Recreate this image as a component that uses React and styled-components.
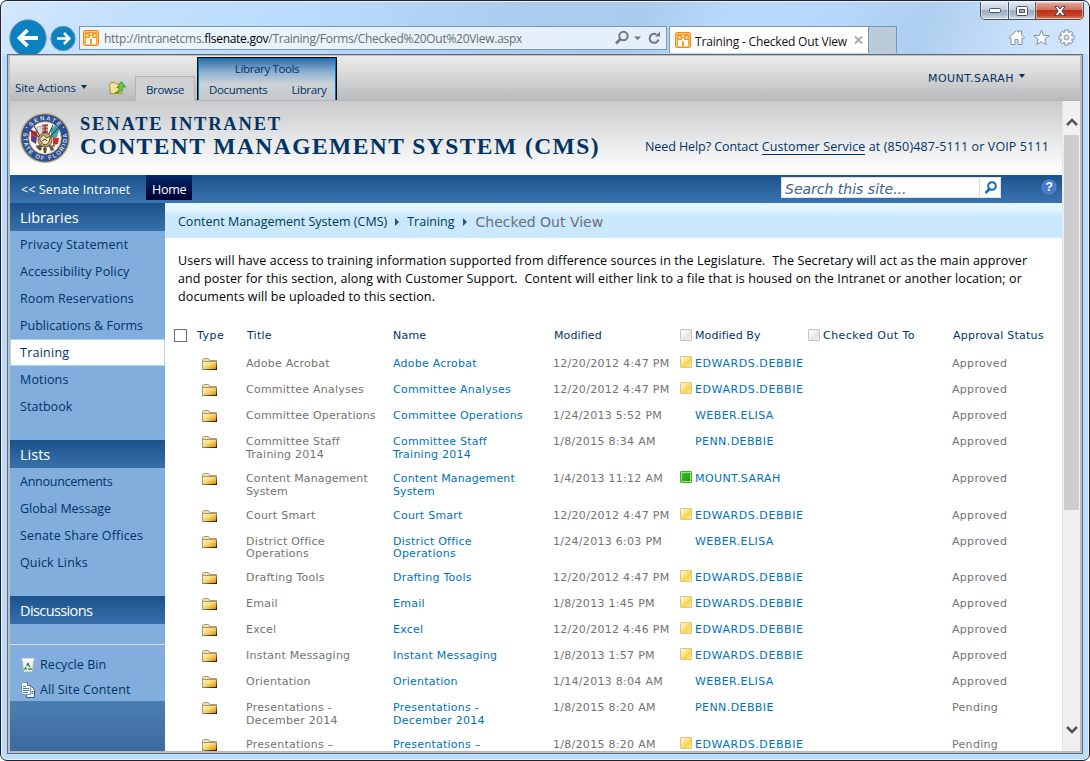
import React from "react";
import styled, { createGlobalStyle, css } from "styled-components";

const ui = `"Open Sans", "Noto Sans", sans-serif`;
const verdana = `"DejaVu Sans", sans-serif`;
const navy = "#003366";
const link = "#0072bc";

const Global = createGlobalStyle`
  * { box-sizing: border-box; }
  html, body { margin: 0; padding: 0; background: #fff; overflow: hidden; }
  a { color: inherit; text-decoration: none; }
`;

const Window = styled.div`
  width: 1090px;
  height: 761px;
  display: flex;
  flex-direction: column;
  overflow: hidden;
  border: 1px solid #20232b;
  border-radius: 7px;
  background: #bcdcfb;
  box-shadow: inset 0 0 0 1px #e6f3ff;
  font-family: ${ui};
  color: ${navy};
`;

const Chrome = styled.div`
  height: 52px;
  flex: none;
  background: linear-gradient(115deg, #d3e8ff 0, #c2dffc 12%, #badcfd 27%, #abcdee 46%, #a9cbec 58%, #b7dafb 66%, #b5d7f9 76%, #aecfef 84%, #cbe2fc 94%, #d4e8fd 100%);
  margin: 1px 1px 0;
  border-radius: 6px 6px 0 0;
  overflow: hidden;
`;

const Caption = styled.div`
  height: 24px;
  display: flex;
  justify-content: flex-end;
  padding-right: 4px;
`;

const CaptionGroup = styled.div`
  display: flex;
  height: 18px;
  border: 1px solid #4c5360;
  border-top: 0;
  border-radius: 0 0 5px 5px;
  overflow: hidden;
`;

const CaptionButton = styled.div`
  width: ${(p) => p.$w}px;
  display: flex;
  align-items: center;
  justify-content: center;
  border-right: ${(p) => (p.$close ? 0 : "1px solid #4c5360")};
  box-shadow: inset 0 0 0 1px rgba(255, 255, 255, 0.45);
  background: ${(p) =>
    p.$close
      ? "linear-gradient(#e3a99c 0, #d2705c 45%, #b8301a 50%, #c5452a 80%, #e08c62 100%)"
      : "linear-gradient(#dfe6ee 0, #c3cfdd 45%, #9babc0 50%, #a9bccf 75%, #cfe0f0 100%)"};
`;

const Toolbar = styled.div`
  height: 28px;
  display: flex;
  align-items: flex-start;
  padding-left: 6px;
`;

const BackSvg = styled.svg`
  display: block;
  flex: none;
  width: 72px;
  height: 36px;
  margin-top: -8px;
`;

const Address = styled.div`
  width: 588px;
  height: 24px;
  margin-left: -1px;
  display: flex;
  align-items: center;
  border: 1px solid #7d96b2;
  background: linear-gradient(90deg, #ecf5fe, #e3effb);
  padding: 0 5px 0 3px;
  color: #6d6d6d;
  font-size: 12px;
  b { font-weight: 400; color: #000; }
`;

const Url = styled.span`
  flex: 1;
  padding-left: 5px;
  white-space: pre;
  letter-spacing: -0.28px;
`;

const Tab = styled.div`
  width: 200px;
  height: 27px;
  margin-left: 2px;
  flex: none;
  display: flex;
  align-items: center;
  padding-left: 5px;
  background: #fff;
  border: 1px solid #7d96b2;
  border-bottom: 0;
  color: #111;
  font-size: 12px;
`;

const TabTitle = styled.span`
  padding: 2px 0 0 4px;
  width: 163px;
  white-space: nowrap;
  letter-spacing: -0.18px;
`;

const NewTab = styled.div`
  width: 28px;
  height: 27px;
  flex: none;
  background: #bccbd9;
  border: 1px solid #7d96b2;
  border-width: 1px 1px 0 0;
`;

const Tools = styled.div`
  display: flex;
  gap: 8px;
  margin: 3px 0 0 111px;
`;

const Frame = styled.div`
  margin: 0 6px 6px;
  flex: 1;
  min-height: 0;
  display: flex;
  flex-direction: column;
  border: 1px solid #5b6b80;
  background: #bfbfbf;
  padding: 1px 1px 1px 2px;
`;

const Client = styled.div`
  flex: 1;
  min-height: 0;
  display: flex;
  flex-direction: column;
  border: 1px solid #b9b9b9;
  border-width: 0 1px 1px 0;
  overflow: hidden;
  background: #fff;
`;

const Ribbon = styled.div`
  height: 45px;
  flex: none;
  display: flex;
  align-items: flex-end;
  border-bottom: 1px solid #b4b5b7;
  background: linear-gradient(#ebebeb, #dcdcdd 35%, #b8babc);
  font-size: 11.5px;
  letter-spacing: -0.28px;
`;

const SiteActions = styled.div`
  width: 125px;
  height: 26px;
  display: flex;
  align-items: center;
  padding: 0 8px 0 5px;
  letter-spacing: -0.1px;
  white-space: nowrap;
  svg { margin-left: auto; }
`;

const Caret = styled.i`
  width: 0;
  height: 0;
  border: 3.5px solid transparent;
  border-top: 4px solid ${navy};
  border-bottom: 0;
  margin-left: 5px;
`;

const BrowseTab = styled.div`
  width: 60px;
  height: 25px;
  margin-bottom: -1px;
  display: flex;
  align-items: center;
  justify-content: center;
  border: 1px solid #b2b4b6;
  border-bottom: 0;
  background: #cfd0d2;
`;

const ToolTabs = styled.div`
  width: 140px;
  height: 43px;
  margin-left: 2px;
  border: 1px solid #0a0a0a;
  border-width: 1px 1px 0 1px;
  background: linear-gradient(#2b6ba5, #8fb1d1 34%, #cdd2d7 62%, #c5c7ca);
  box-shadow: inset 1px 1px 0 #0072b8, inset -1px 0 0 #0072b8;
`;

const ToolTitle = styled.div`
  height: 21px;
  line-height: 21px;
  text-align: center;
  letter-spacing: -0.35px;
`;

const ToolRow = styled.div`
  display: flex;
  line-height: 22px;
  padding-left: 11px;
  gap: 24px;
  letter-spacing: -0.35px;
`;

const User = styled.div`
  margin-left: auto;
  height: 32px;
  padding-right: 55px;
  display: flex;
  align-items: flex-start;
  font: 11px/22px ${verdana};
  letter-spacing: 0.45px;
  i { margin-top: 6px; }
`;

const Body = styled.div`
  flex: 1;
  min-height: 0;
  display: flex;
`;

const Page = styled.div`
  width: 1052px;
  display: flex;
  flex-direction: column;
  overflow: hidden;
`;

const Banner = styled.div`
  height: 74px;
  flex: none;
  display: flex;
  background: linear-gradient(#c9cacc, #ffffff 96%);
`;

const Seal = styled.svg`
  width: 50px;
  height: 50px;
  margin: 12px 0 0 10px;
  flex: none;
`;

const Titles = styled.div`
  margin-left: 10px;
  width: 565px;
  padding-top: 13px;
  font-family: "Liberation Serif", serif;
  font-weight: 700;
  white-space: nowrap;
`;

const TitleSmall = styled.div`
  font-size: 18.5px;
  line-height: 21px;
  letter-spacing: 1.8px;
`;

const TitleBig = styled.div`
  font-size: 23.5px;
  line-height: 22px;
  letter-spacing: 1.45px;
`;

const Help = styled.div`
  padding-top: 37px;
  font-size: 12.5px;
  line-height: 18px;
  letter-spacing: 0.12px;
  white-space: nowrap;
  span { letter-spacing: -0.08px; }
  a { display: inline-block; line-height: 14px; border-bottom: 1px solid ${navy}; }
`;

const NavBar = styled.div`
  height: 28px;
  flex: none;
  display: flex;
  align-items: flex-start;
  background: linear-gradient(#1b528c, #3a75af);
  color: #fff;
  font-size: 12.5px;
`;

const NavItem = styled.a`
  height: 25px;
  line-height: 29px;
  width: ${(p) => p.$w}px;
  padding-left: ${(p) => p.$pad}px;
  white-space: nowrap;
  letter-spacing: ${(p) => p.$ls || 0}px;
  ${(p) => p.$on && css`background: linear-gradient(#04286a, #000030);`}
`;

const Search = styled.div`
  width: 220px;
  height: 21px;
  margin: 2px 0 0 589px;
  display: flex;
  background: #fff;
  border: 1px solid #e1e1e1;
  color: #44618a;
  font: italic 14px/22px ${verdana};
`;

const SearchText = styled.span`
  width: 198px;
  padding-left: 3px;
  border-right: 1px solid #ddd;
`;

const HelpIcon = styled.svg`
  width: 16px;
  height: 16px;
  margin: 4px 0 0 40px;
`;

const Main = styled.div`
  flex: 1;
  min-height: 0;
  display: flex;
`;

const Sidebar = styled.div`
  width: 155px;
  flex: none;
  display: flex;
  flex-direction: column;
  background: linear-gradient(#4c7fb1, #3b6a9e) 0 498px / 100% 50px no-repeat #82aede;
`;

const SideHead = styled.div`
  height: 28px;
  flex: none;
  padding-left: 10px;
  line-height: 29px;
  color: #fff;
  font-size: 14.5px;
  letter-spacing: ${(p) => p.$ls || 0}px;
  background: linear-gradient(#1b528c, #3770aa);
`;

const SideList = styled.div`
  height: ${(p) => p.$h}px;
  flex: none;
`;

const SideItem = styled.a`
  display: block;
  height: 27px;
  line-height: 25px;
  padding-left: 9px;
  border: 1px solid transparent;
  font-size: 12.5px;
  letter-spacing: ${(p) => p.$ls ?? 0.14}px;
  white-space: nowrap;
  ${(p) => p.$on && css`background: #fff; border-color: #a9d6f5;`}
`;

const SideFoot = styled.div`
  border-top: 1px solid #d9dcd6;
  padding: 7px 0 0 11px;
`;

const FootItem = styled.a`
  display: flex;
  align-items: center;
  gap: 5px;
  height: 25px;
  font-size: 12.5px;
  letter-spacing: 0.1px;
  white-space: nowrap;
`;

const Content = styled.div`
  flex: 1;
  min-width: 0;
`;

const Crumbs = styled.div`
  height: 35px;
  display: flex;
  align-items: center;
  padding: 2px 0 0 13px;
  background: linear-gradient(#e6f5ff 0 6px, #cae9fe 14px);
  font-size: 12.5px;
  white-space: nowrap;
  color: #003a4f;
`;

const Arrow = styled.i`
  width: 0;
  height: 0;
  border: 4px solid transparent;
  border-left-color: #33536e;
  border-right: 0;
  margin: 0 8px;
`;

const Current = styled.span`
  padding-left: 1px;
  font: 14px ${verdana};
  color: #6a6f75;
`;

const Intro = styled.p`
  margin: 0;
  padding: 14px 0 0 13px;
  height: 88px;
  font-size: 12.5px;
  line-height: 18px;
  letter-spacing: 0.11px;
  color: #000;
  white-space: pre;
`;

const Table = styled.div`
  font: 11px/13px ${verdana};
`;

const Row = styled.div`
  display: grid;
  grid-template-columns: 28px 44px 147px 160px 127px 128px 144px 100px;
  height: ${(p) => p.$h || 26}px;
  line-height: ${(p) => p.$lh || 13}px;
  padding-left: 9px;
  color: #727272;
  ${(p) => p.$head && css`
    color: ${navy};
    height: 28px;
  `}
`;

const Cell = styled.div`
  white-space: pre;
  padding-top: ${(p) => p.$top ?? 3}px;
  margin-left: ${(p) => p.$left || 0}px;
  color: ${(p) => p.$link && link};
  letter-spacing: ${(p) => p.$ls ?? 0.22}px;
`;

const Person = styled(Cell)`
  display: flex;
  gap: 3px;
`;

const Presence = styled.span`
  width: 12px;
  height: 12px;
  flex: none;
  margin-top: ${(p) => (p.$kind === "off" ? 0 : -1)}px;
  border-radius: 1px;
  border: 1px solid transparent;
  ${(p) => p.$kind === "away" && css`background: linear-gradient(135deg, #fff3c6 10%, #fbe07a 45%, #f8d648 60%, #fdeaa0); border-color: #dfc583;`}
  ${(p) => p.$kind === "on" && css`background: linear-gradient(135deg, #45c536, #18940d); border-color: #3fae2d; box-shadow: inset 0 0 0 1px #9be77e;`}
  ${(p) => p.$kind === "off" && css`background: linear-gradient(135deg, #f6f6f6 30%, #e3e3e3 60%, #f2f2f2); border-color: #c4c4c4;`}
`;

const Check = styled.span`
  display: block;
  width: 13px;
  height: 13px;
  border: 1px solid #6f6f6f;
  background: #fff;
`;

const ScrollBar = styled.div`
  flex: 1;
  display: flex;
  flex-direction: column;
  align-items: center;
  background: #f0f0f0;
  border-left: 1px solid #e3e3e3;
`;

const Thumb = styled.div`
  width: 15px;
  height: 375px;
  background: #cdcdcd;
`;

const ScrollArrow = styled.svg`
  width: 12px;
  height: 8px;
  margin: ${(p) => p.$m};
`;

function PageIcon() {
  return (
    <svg width="16" height="16" viewBox="0 0 16 16">
      <rect x=".5" y=".5" width="15" height="15" rx="1.5" fill="#f99d27" stroke="#f08a12" />
      <rect x="1.5" y="1.5" width="13" height="13" fill="none" stroke="#fcc67a" />
      <g fill="#fff">
        <rect x="3" y="8" width="4" height="6" />
        <rect x="9" y="8" width="4" height="6" />
        <rect x="7" y="6" width="2" height="3" />
        <circle cx="4.5" cy="5.5" r="1.1" />
        <circle cx="11.5" cy="5.5" r="1.1" />
        <circle cx="8" cy="4" r="1" />
      </g>
    </svg>
  );
}

function Folder() {
  return (
    <svg width="16" height="13" viewBox="0 0 16 13">
      <defs>
        <linearGradient id="fold" x1="0" y1="0" x2="1" y2="1">
          <stop offset="0" stopColor="#fff6bd" />
          <stop offset=".45" stopColor="#f8d873" />
          <stop offset=".85" stopColor="#e09c1c" />
          <stop offset="1" stopColor="#8c5708" />
        </linearGradient>
        <linearGradient id="foldEdge" x1="0" y1="0" x2="1" y2="0">
          <stop offset="0" stopColor="#a39570" />
          <stop offset=".5" stopColor="#5e4a20" />
          <stop offset="1" stopColor="#1d1404" />
        </linearGradient>
        <linearGradient id="foldSide" x1="0" y1="0" x2="0" y2="1">
          <stop offset="0" stopColor="#a39570" />
          <stop offset="1" stopColor="#1d1404" />
        </linearGradient>
      </defs>
      <path d="M.5 11.5V1.5L1.5.5H6.500L7.500 2.500h7v9z" fill="#efe4a8" stroke="#a99c77" />
      <rect x="1" y="3.5" width="13.5" height="8" fill="url(#fold)" />
      <path d="M.5 3.5H14.5" stroke="#a39678" />
      <rect x="0" y="11" width="15" height="1" fill="url(#foldEdge)" />
      <rect x="14" y="3" width="1" height="9" fill="url(#foldSide)" />
    </svg>
  );
}

function FloridaSeal() {
  return (
    <Seal viewBox="0 0 50 50">
      <defs>
        <path id="sealTop" d="M7.200 25A17.800 17.800 0 0 1 42.800 25" />
        <path id="sealBottom" d="M4 18.400A22 22 0 1 0 46 18.400" />
      </defs>
      <circle cx="25" cy="25" r="24.3" fill="#28509e" stroke="#c4ad70" strokeWidth="1.3" />
      <circle cx="25" cy="25" r="16.2" fill="#fbf8ee" stroke="#c9b16f" strokeWidth=".8" />
      <g fill="#e6dcb4" fontFamily="Liberation Sans, sans-serif" fontSize="6" fontWeight="700">
        <text letterSpacing="1.5"><textPath href="#sealTop" startOffset="51%" textAnchor="middle">SENATE</textPath></text>
        <text letterSpacing="1.450"><textPath href="#sealBottom" startOffset="50.500%" textAnchor="middle">STATE OF FLORIDA</textPath></text>
      </g>
      <circle cx="6.500" cy="14.500" r=".8" fill="#e0d3a0" />
      <circle cx="43.500" cy="14.500" r=".8" fill="#e0d3a0" />
      <path d="M11 17l7 2-2 12-5-3z" fill="#cf2f33" />
      <path d="M12 23l4 1v6l-4-2z" fill="#2d4f9c" />
      <path d="M17 14l5-1 1 9-6 1z" fill="#dcdcdc" stroke="#777" strokeWidth=".5" />
      <path d="M22 11.5l6-.5v9h-6z" fill="#b9585a" />
      <path d="M22 14h6M22 17h6" stroke="#fff" strokeWidth=".8" />
      <path d="M31 16l5-4 3 5-2 7-6 1z" fill="#37a9a3" />
      <path d="M33 24l6 1-1 6-5 1z" fill="#cf2f33" />
      <path d="M10 17L30 33M39 14L20 35M16 33h19M25 12v24M14 13l7 12M33 12l-5 11" stroke="#2c2a25" strokeWidth="1" />
      <circle cx="25" cy="27" r="7" fill="#c4a976" stroke="#4c3e26" strokeWidth=".8" />
      <path d="M19.500 26l4-4 3 3 4-2-1 5-3 4-4-1z" fill="#f3e5bd" stroke="#5a4525" strokeWidth=".9" />
      <path d="M22 28l3-2 2 2" fill="none" stroke="#3a3020" />
      <path d="M16 34l4-2 2 4-2 2zM29 33l4 1 1 3-3 1zM23 35h4l-1 5h-2z" fill="#5a5340" />
    </Seal>
  );
}

const libraries = [
  ["Privacy Statement", 0.2],
  ["Accessibility Policy"],
  ["Room Reservations", 0.08],
  ["Publications & Forms", 0],
  ["Training", 0.25],
  ["Motions"],
  ["Statbook", 0.05],
];
const lists = [["Announcements", -0.25], ["Global Message", -0.05], ["Senate Share Offices"], ["Quick Links"]];

const E = "EDWARDS.DEBBIE";
const rows = [
  ["Adobe Acrobat", "12/20/2012 4:47 PM", E, "away"],
  ["Committee Analyses", "12/20/2012 4:47 PM", E, "away"],
  ["Committee Operations", "1/24/2013 5:52 PM", "WEBER.ELISA"],
  ["Committee Staff\nTraining 2014", "1/8/2015 8:34 AM", "PENN.DEBBIE", "", 37],
  ["Content Management\nSystem", "1/4/2013 11:12 AM", "MOUNT.SARAH", "on", 37],
  ["Court Smart", "12/20/2012 4:47 PM", E, "away"],
  ["District Office\nOperations", "1/24/2013 6:03 PM", "WEBER.ELISA", "", 36, 12],
  ["Drafting Tools", "12/20/2012 4:47 PM", E, "away"],
  ["Email", "1/8/2013 1:45 PM", E, "away"],
  ["Excel", "12/20/2012 4:46 PM", E, "away"],
  ["Instant Messaging", "1/8/2013 1:57 PM", E, "away"],
  ["Orientation", "1/14/2013 8:04 AM", "WEBER.ELISA"],
  ["Presentations -\nDecember 2014", "1/8/2015 8:20 AM", "PENN.DEBBIE", "", 37, 13, "Pending"],
  ["Presentations –", "1/8/2015 8:20 AM", E, "away", 26, 13, "Pending"],
];

export default function App() {
  return (
    <Window>
      <Global />
      <Chrome>
        <Caption>
          <CaptionGroup>
            <CaptionButton $w={28}>
              <svg width="12" height="5"><rect x=".5" y=".5" width="11" height="4" rx="1" fill="#fff" stroke="#4b5568" /></svg>
            </CaptionButton>
            <CaptionButton $w={27}>
              <svg width="12" height="10"><rect x=".5" y=".5" width="11" height="9" rx="1" fill="#fff" stroke="#4b5568" /><rect x="3.5" y="3.5" width="5" height="3" fill="#9fb0c5" stroke="#4b5568" /></svg>
            </CaptionButton>
            <CaptionButton $w={47} $close>
              <svg width="12" height="10"><path d="M.8.5h3L6 3l2.200-2.500h3L7.800 5l3.400 4.500h-3L6 7 3.800 9.500h-3L4.200 5z" fill="#fff" stroke="#4b4457" /></svg>
            </CaptionButton>
          </CaptionGroup>
        </Caption>
        <Toolbar>
          <BackSvg viewBox="0 0 72 36">
            <circle cx="20" cy="20" r="18.200" fill="#0a82c2" stroke="#6f93b3" />
            <path d="M11.500 20h18.500M19.500 12l-8 8 8 8" fill="none" stroke="#fff" strokeWidth="3.800" />
            <circle cx="55" cy="20.500" r="12.200" fill="#0a82c2" stroke="#6f93b3" />
            <path d="M49 20.500h12M56 15l5.300 5.500-5.300 5.500" fill="none" stroke="#fff" strokeWidth="2.600" />
          </BackSvg>
          <Address>
            <PageIcon />
            <Url>http://intranetcms.<b>flsenate.gov</b>/Training/Forms/Checked%20Out%20View.aspx</Url>
            <svg width="46" height="16" viewBox="0 0 46 16">
              <circle cx="8.500" cy="6" r="4.200" fill="none" stroke="#777" strokeWidth="2" />
              <path d="M5.500 9L1 13.500" stroke="#777" strokeWidth="2.600" />
              <path d="M19 6.500h7l-3.500 3.500z" fill="#777" />
              <path d="M43.500 9.500A4.500 4.500 0 1 1 41.500 4.500" fill="none" stroke="#777" strokeWidth="2" />
              <path d="M40 6.500h5V1.500z" fill="#777" />
            </svg>
          </Address>
          <Tab>
            <PageIcon />
            <TabTitle>Training - Checked Out View</TabTitle>
            <svg width="9" height="8"><path d="M1 .5l7 7M8 .5l-7 7" stroke="#aaa" strokeWidth="2" /></svg>
          </Tab>
          <NewTab />
          <Tools>
            <svg width="17" height="17" viewBox="0 0 17 17"><path d="M1 8.500L8.500 1.500l2 1.800V2h3v4l3 2.500-1.200 1.300-1.300-1V15.500h-4v-5h-3v5h-4V8.800l-1 1z" fill="#fff" stroke="#8592a0" /></svg>
            <svg width="17" height="17" viewBox="0 0 17 17"><path d="M8.500 1l2 5.300 5.800.3-4.500 3.600 1.500 5.500-4.800-3.100-4.800 3.100 1.500-5.500L.7 6.600l5.800-.3z" fill="#fff" stroke="#8592a0" /></svg>
            <svg width="17" height="17" viewBox="0 0 17 17">
              <g stroke="#8592a0" strokeWidth="4.200">
                <path d="M8.500.5v16M.5 8.500h16M2.900 2.900l11.200 11.200M14.100 2.900L2.900 14.100" />
              </g>
              <circle cx="8.500" cy="8.500" r="5.700" fill="#fff" stroke="#8592a0" />
              <g stroke="#fff" strokeWidth="2.200">
                <path d="M8.500 1.400v14.200M1.400 8.500h14.200M3.500 3.500l10 10M13.500 3.500l-10 10" />
              </g>
              <circle cx="8.500" cy="8.500" r="2.500" fill="#cfe2f5" stroke="#8592a0" />
            </svg>
          </Tools>
        </Toolbar>
      </Chrome>
      <Frame>
        <Client>
          <Ribbon>
            <SiteActions>
              Site Actions<Caret />
              <svg width="18" height="15" viewBox="0 0 18 15">
                <path d="M1 13.500V4l1-1.500h4L7.500 4H13v9.500z" fill="#f7df8f" stroke="#b3892b" />
                <path d="M1.500 6h11" stroke="#fff3c0" />
                <path d="M6 12.500c3 0 4-2 4-5H8L12.500 1.500 16.500 7h-2.500C14 10.500 11 13 6 12.500z" fill="#6cc843" stroke="#2d8a1d" strokeWidth=".8" />
              </svg>
            </SiteActions>
            <BrowseTab>Browse</BrowseTab>
            <ToolTabs>
              <ToolTitle>Library Tools</ToolTitle>
              <ToolRow><span>Documents</span><span>Library</span></ToolRow>
            </ToolTabs>
            <User>MOUNT.SARAH<Caret /></User>
          </Ribbon>
          <Body>
            <Page>
              <Banner>
                <FloridaSeal />
                <Titles>
                  <TitleSmall>SENATE INTRANET</TitleSmall>
                  <TitleBig>CONTENT MANAGEMENT SYSTEM (CMS)</TitleBig>
                </Titles>
                <Help><span>Need Help? Contact </span><a>Customer Service</a> at (850)487-5111 or VOIP 5111</Help>
              </Banner>
              <NavBar>
                <NavItem $w={136} $pad={11} $ls={0.1}>&lt;&lt; Senate Intranet</NavItem>
                <NavItem $w={46} $pad={6} $ls={-0.25} $on>Home</NavItem>
                <Search>
                  <SearchText>Search this site...</SearchText>
                  <svg width="20" height="19" viewBox="0 0 20 19"><circle cx="12" cy="8" r="3.800" fill="none" stroke="#0b6db7" strokeWidth="2" /><path d="M9.500 11L5.500 15" stroke="#0b6db7" strokeWidth="2.500" /></svg>
                </Search>
                <HelpIcon viewBox="0 0 16 16">
                  <circle cx="8" cy="8" r="7" fill="#4478cf" stroke="#5f8cd8" />
                  <text x="8" y="12.200" textAnchor="middle" fill="#fff" fontFamily="Liberation Sans, sans-serif" fontSize="12.500" fontWeight="700">?</text>
                </HelpIcon>
              </NavBar>
              <Main>
                <Sidebar>
                  <SideHead>Libraries</SideHead>
                  <SideList $h={209}>
                    {libraries.map(([t, ls]) => <SideItem key={t} $ls={ls} $on={t === "Training"}>{t}</SideItem>)}
                  </SideList>
                  <SideHead>Lists</SideHead>
                  <SideList $h={128}>
                    {lists.map(([t, ls]) => <SideItem key={t} $ls={ls}>{t}</SideItem>)}
                  </SideList>
                  <SideHead $ls={-0.6}>Discussions</SideHead>
                  <SideList $h={20} />
                  <SideFoot>
                    <FootItem>
                      <svg width="14" height="16" viewBox="0 0 14 16">
                        <path d="M1 1.500h12l-1.500 13.500h-9z" fill="#f1f4f3" stroke="#a7b3b3" />
                        <path d="M1 2.500h12" stroke="#fff" strokeWidth="2" />
                        <path d="M7 6.500l3 5.500H4z" fill="none" stroke="#3d8b3b" strokeWidth="1.500" strokeDasharray="4 1.200" />
                      </svg>
                      Recycle Bin
                    </FootItem>
                    <FootItem>
                      <svg width="14" height="16" viewBox="0 0 14 16">
                        <path d="M5.500 4.500h5l3 3v8h-8z" fill="#e9eff7" stroke="#3f5f8e" />
                        <path d="M.5.500h6l3 3v9h-9z" fill="#fff" stroke="#7f93b0" />
                        <path d="M2 4.500h3M2 6.500h6M2 8.500h6M2 10.500h5M10.500 9.500h2M10.500 11.500h2" stroke="#4a79b8" />
                        <path d="M6.500.500v3h3" fill="#cfdced" stroke="#3f5f8e" />
                      </svg>
                      All Site Content
                    </FootItem>
                  </SideFoot>
                </Sidebar>
                <Content>
                  <Crumbs>
                    <span>Content Management System (CMS)</span><Arrow /><span>Training</span><Arrow /><Current>Checked Out View</Current>
                  </Crumbs>
                  <Intro>{"Users will have access to training information supported from difference sources in the Legislature.  The Secretary will act as the main approver\nand poster for this section, along with Customer Support.  Content will either link to a file that is housed on the Intranet or another location; or\ndocuments will be uploaded to this section."}</Intro>
                  <Table>
                    <Row $head>
                      <Cell><Check /></Cell>
                      <Cell $left={-5} $ls={0.5}>Type</Cell>
                      <Cell $left={1}>Title</Cell>
                      <Cell>Name</Cell>
                      <Cell $left={1} $ls={0.1}>Modified</Cell>
                      <Person $ls={0.1}><Presence $kind="off" />Modified By</Person>
                      <Person $ls={0.45}><Presence $kind="off" />Checked Out To</Person>
                      <Cell $left={1}>Approval Status</Cell>
                    </Row>
                    {rows.map(([title, date, who, kind, h, lh, status]) => {
                      const top = lh === 12 ? 4 : 3;
                      return (
                        <Row key={title} $h={h} $lh={lh}>
                          <Cell />
                          <Cell $top={4}><Folder /></Cell>
                          <Cell $top={top} $ls={title.startsWith("Content") ? 0.12 : 0.24}>{title}</Cell>
                          <Cell $top={top} $ls={title.startsWith("Content") ? 0.12 : 0.24} $link>{title}</Cell>
                          <Cell $top={top} $ls={0.29}>{date}</Cell>
                          <Person $top={top} $link $ls={who === E ? 0.57 : 0.42}><Presence $kind={kind} />{who}</Person>
                          <Cell />
                          <Cell $top={top} $ls={0.3}>{status || "Approved"}</Cell>
                        </Row>
                      );
                    })}
                  </Table>
                </Content>
              </Main>
            </Page>
            <ScrollBar>
              <ScrollArrow $m="17px 0 9px" viewBox="0 0 12 8"><path d="M1 7l5-5 5 5" fill="none" stroke="#555" strokeWidth="2.500" /></ScrollArrow>
              <Thumb />
              <ScrollArrow $m="auto 0 17px" viewBox="0 0 12 8"><path d="M1 1l5 5 5-5" fill="none" stroke="#555" strokeWidth="2.500" /></ScrollArrow>
            </ScrollBar>
          </Body>
        </Client>
      </Frame>
    </Window>
  );
}
